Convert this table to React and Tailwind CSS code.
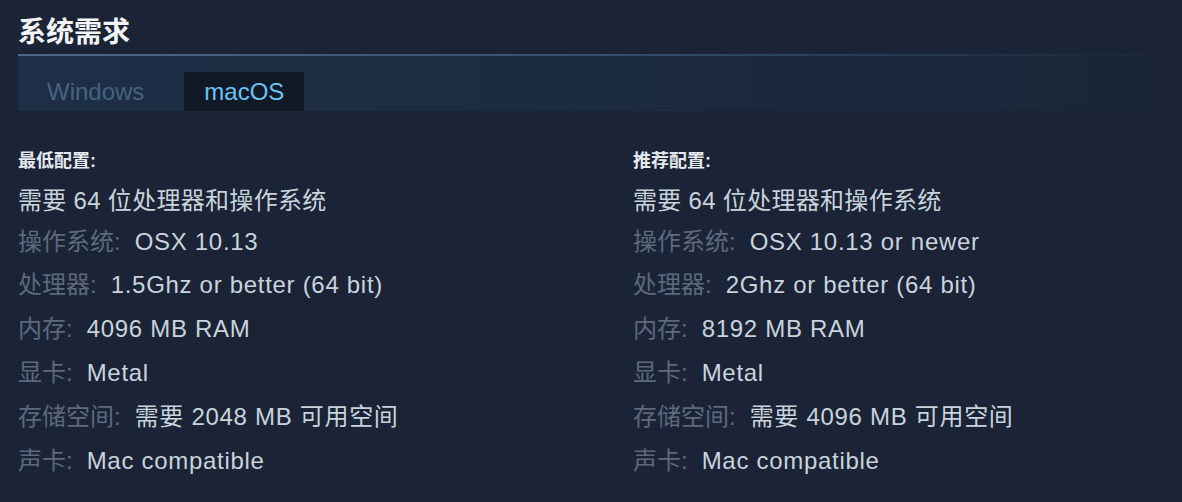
import React from 'react';

const font = { fontFamily: '"Liberation Sans", "Noto Sans CJK SC", sans-serif' };

const minSpec = [
  ['操作系统', 'OSX 10.13'],
  ['处理器', '1.5Ghz or better (64 bit)'],
  ['内存', '4096 MB RAM'],
  ['显卡', 'Metal'],
  ['存储空间', '需要 2048 MB 可用空间'],
  ['声卡', 'Mac compatible'],
];

const recSpec = [
  ['操作系统', 'OSX 10.13 or newer'],
  ['处理器', '2Ghz or better (64 bit)'],
  ['内存', '8192 MB RAM'],
  ['显卡', 'Metal'],
  ['存储空间', '需要 4096 MB 可用空间'],
  ['声卡', 'Mac compatible'],
];

const SpecColumn = ({ title, rows }) => (
  <div className="flex flex-col">
    <div className="h-[40px] flex items-center text-[18px] font-bold text-[#e4e9ee]">{title}</div>
    <div className="h-[40px] flex items-center text-[24px] tracking-[0.3px] text-[#c9d3dc]">需要 64 位处理器和操作系统</div>
    {rows.map(([label, value], i) => (
      <div key={label} className={`${i === 0 ? 'h-[42px]' : 'h-[44px]'} flex items-center text-[24px] whitespace-nowrap`}>
        <span className="text-[#5d697c]">{label}:</span>
        <span className="ml-[14px] tracking-[0.7px] text-[#c9d3dc]">{value}</span>
      </div>
    ))}
  </div>
);

export default function App() {
  return (
    <div className="w-[1182px] h-[502px] bg-[#1a2436] overflow-hidden pl-[18px]" style={font}>
      <h2 className="pt-[15px] h-[54px] text-[28px] leading-[36px] font-semibold text-[#f2f4f6]">系统需求</h2>
      <div className="h-[2px] bg-gradient-to-r from-[#4d6985] via-[#34506e] to-transparent" />
      <div className="h-[55px] flex items-end pl-[9px] gap-5 bg-gradient-to-r from-[#1d2f47] via-[#1b2b41] to-[#1a2436]">
        <div className="h-[39px] px-5 flex items-center text-[24px] text-[#46637f]">Windows</div>
        <div className="h-[39px] px-5 flex items-center text-[24px] text-[#6cc2f4] bg-[#111926]">macOS</div>
      </div>
      <div className="mt-[30px] grid grid-cols-[615px_1fr]">
        <SpecColumn title="最低配置:" rows={minSpec} />
        <SpecColumn title="推荐配置:" rows={recSpec} />
      </div>
    </div>
  );
}
